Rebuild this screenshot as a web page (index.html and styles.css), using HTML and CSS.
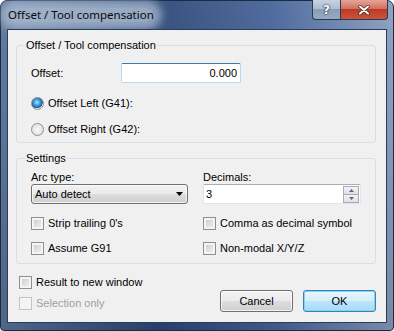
FILE: index.html
```html
<!DOCTYPE html>
<html lang="en">
<head>
    <meta charset="UTF-8">
    <title>Offset / Tool compensation</title>
    <link rel="stylesheet" href="styles.css">
</head>
<body>
    <div class="window">
        <div class="titlebar">
            <span class="title"><span class="title-text">Offset / Tool compensation</span></span>
            <div class="caption">
                <span class="cap-btn help">?</span>
                <span class="cap-btn close">
                    <svg width="12" height="10" viewBox="0 0 12 10">
                        <path d="M2 1.5 L10 8.5 M10 1.5 L2 8.5" stroke="#3a2620" stroke-width="3.4" stroke-linecap="round"/>
                        <path d="M2 1.5 L10 8.5 M10 1.5 L2 8.5" stroke="#fff" stroke-width="2" stroke-linecap="round"/>
                    </svg>
                </span>
            </div>
        </div>

        <div class="client">
            <fieldset class="group group-offset">
                <legend>Offset / Tool compensation</legend>
                <div class="group-body">
                    <div class="offset-row">
                        <label class="offset-label" for="offset">Offset:</label>
                        <input id="offset" class="textbox focused align-right" type="text" value="0.000">
                    </div>
                    <label class="option first"><span class="radio checked"></span>Offset Left (G41):</label>
                    <label class="option second"><span class="radio"></span>Offset Right (G42):</label>
                </div>
            </fieldset>

            <fieldset class="group group-settings">
                <legend>Settings</legend>
                <div class="group-body settings-grid">
                    <div class="col">
                        <div class="field-label">Arc type:</div>
                        <div class="combo">
                            <span>Auto detect</span>
                            <svg width="7" height="4" viewBox="0 0 7 4"><path d="M0 0 H7 L3.5 4 Z" fill="#000"/></svg>
                        </div>
                        <label class="option first"><span class="check"></span>Strip trailing 0's</label>
                        <label class="option second"><span class="check"></span>Assume G91</label>
                    </div>
                    <div class="col">
                        <div class="field-label">Decimals:</div>
                        <div class="spin">
                            <input class="spin-input" type="text" value="3">
                            <div class="spin-buttons">
                                <span class="spin-btn"><svg width="5" height="3" viewBox="0 0 5 3"><path d="M0 3 H5 L2.5 0 Z" fill="#4b6a9c"/></svg></span>
                                <span class="spin-btn"><svg width="5" height="3" viewBox="0 0 5 3"><path d="M0 0 H5 L2.5 3 Z" fill="#4b6a9c"/></svg></span>
                            </div>
                        </div>
                        <label class="option first"><span class="check"></span>Comma as decimal symbol</label>
                        <label class="option second"><span class="check"></span>Non-modal X/Y/Z</label>
                    </div>
                </div>
            </fieldset>

            <div class="footer">
                <div class="footer-checks">
                    <label class="option"><span class="check"></span>Result to new window</label>
                    <label class="option disabled"><span class="check"></span>Selection only</label>
                </div>
                <div class="buttons">
                    <button class="btn">Cancel</button>
                    <button class="btn default">OK</button>
                </div>
            </div>
        </div>
    </div>
</body>
</html>
```

FILE: styles.css
```css
* {
    box-sizing: border-box;
}
body {
    margin: 0;
    background: #fff;
    font-family: "Liberation Sans", Arial, sans-serif;
    font-size: 11px;
    color: #000;
}

/* window frame */
.window {
    width: 394px;
    height: 331px;
    display: flex;
    flex-direction: column;
    padding: 0 6px 7px;
    border: 1px solid #1b2b45;
    border-radius: 7px 7px 4px 4px;
    background:
        linear-gradient(to bottom, rgba(255, 255, 255, 0.06), rgba(0, 0, 0, 0.12)),
        linear-gradient(to right, #5a7498, #2c4876 40%, #47659a 70%, #889ebd 100%);
}
.titlebar {
    height: 28px;
    display: flex;
    justify-content: space-between;
}
.title {
    display: flex;
    align-items: center;
    margin-left: -6px;
    padding-left: 7px;
}
.title-text {
    font-family: "Noto Sans", "Open Sans", sans-serif;
    font-size: 11.5px;
    color: #0a0a0a;
    background: rgba(180, 196, 216, 0.75);
    border-radius: 9px;
    box-shadow: 0 0 9px 8px rgba(180, 196, 216, 0.7);
    line-height: 14px;
}
.caption {
    display: flex;
    align-self: flex-start;
    margin: -1px -1px 0 0;
}
.cap-btn {
    height: 20px;
    display: flex;
    align-items: center;
    justify-content: center;
    border: 1px solid #2a3a56;
    border-top: none;
}
.help {
    width: 28px;
    border-right: none;
    border-radius: 0 0 0 4px;
    background: linear-gradient(#c9d3e0, #aebdd0 45%, #8a9db8 50%, #97aac3);
    color: #fff;
    font-family: "DejaVu Sans", sans-serif;
    font-weight: bold;
    font-size: 12px;
    text-shadow: 0 0 1px #2c3b55, 0 0 1px #2c3b55, 0 0 2px #2c3b55;
}
.close {
    width: 48px;
    border-radius: 0 0 4px 0;
    background: linear-gradient(#e4a498, #d3715f 45%, #bd3b26 50%, #c9533b);
}

/* client area */
.client {
    flex: 1;
    display: flex;
    flex-direction: column;
    background: #f0f0f0;
    border: 1px solid #2a3d5d;
}
.group {
    margin: 9px 10px 0 8px;
    padding: 0;
    min-width: 0;
    border: 1px solid #d5dfe5;
    border-radius: 3px;
}
.group legend {
    margin-left: 8px;
    padding: 0 1px;
    line-height: 13px;
}
.group-offset .group-body {
    padding: 11px 14px 6px;
}
.offset-row {
    display: flex;
    align-items: center;
}
.offset-label {
    width: 90px;
}
.textbox {
    width: 120px;
    height: 20px;
    margin: 0;
    padding: 0 3px;
    font: inherit;
    color: #000;
    background: #fff;
    border: 1px solid #e2e3ea;
    border-top-color: #abadb3;
    border-radius: 2px;
    outline: none;
}
.textbox.focused {
    border-color: #b7d9ed;
    border-top-color: #3d7bad;
}
.align-right {
    text-align: right;
}

.option {
    display: flex;
    align-items: center;
    gap: 4px;
    height: 13px;
    line-height: 13px;
    white-space: nowrap;
}
.group-offset .option.first {
    margin-top: 14px;
}
.group-offset .option.second {
    margin-top: 13px;
}

.radio {
    width: 13px;
    height: 13px;
    border-radius: 50%;
    border: 1px solid #8b8f95;
    background: radial-gradient(circle at 50% 50%, #f8f8f8 0%, #e6e6e6 60%, #d2d4d8 100%);
    flex: none;
}
.radio.checked {
    background:
        radial-gradient(circle at 45% 40%, #b9e4fb 0%, #3b9ddc 35%, #1b5e97 62%, transparent 66%),
        radial-gradient(circle, #f8f8f8 0%, #e6e6e6 70%, #d2d4d8 100%);
}
.check {
    width: 13px;
    height: 13px;
    flex: none;
    border: 1px solid #8e8f8f;
    background: linear-gradient(135deg, #c6cace, #f3f3f3);
    box-shadow: inset 0 0 0 2px #f4f4f4;
}

/* settings */
.settings-grid {
    display: grid;
    grid-template-columns: 157px 158px;
    column-gap: 15px;
    padding: 6px 14px 8px;
}
.field-label {
    line-height: 13px;
}
.combo {
    height: 20px;
    display: flex;
    align-items: center;
    justify-content: space-between;
    padding: 0 4px 0 3px;
    border: 1px solid #707070;
    border-radius: 3px;
    background: linear-gradient(#f2f2f2, #ebebeb 50%, #dddddd 51%, #cfcfcf);
    box-shadow: inset 0 0 0 1px rgba(255, 255, 255, 0.7);
}
.spin {
    height: 20px;
    display: flex;
    align-items: center;
    padding-right: 1px;
    background: #fff;
    border: 1px solid #e2e3ea;
    border-top-color: #abadb3;
    border-radius: 2px;
}
.spin-input {
    flex: 1;
    min-width: 0;
    height: 18px;
    padding: 0 2px;
    border: none;
    outline: none;
    font: inherit;
    color: #000;
    background: transparent;
}
.spin-buttons {
    display: flex;
    flex-direction: column;
    width: 16px;
    height: 17px;
}
.spin-btn {
    flex: 1;
    display: flex;
    align-items: center;
    justify-content: center;
    border: 1px solid #a9acb2;
    background: linear-gradient(#f4f4f4, #e0e0e0);
}
.spin-btn + .spin-btn {
    border-top: none;
}
.settings-grid .option.first {
    margin-top: 13px;
}
.settings-grid .option.second {
    margin-top: 12px;
}

/* footer */
.footer {
    flex: 1;
    display: flex;
    justify-content: space-between;
    align-items: flex-end;
    padding: 12px 10px 10px 11px;
}
.footer-checks {
    align-self: flex-start;
    display: flex;
    flex-direction: column;
    gap: 8px;
}
.option.disabled {
    color: #a0a0a0;
}
.option.disabled .check {
    border-color: #c3c3c3;
    background: #f4f4f4;
    box-shadow: none;
}
.buttons {
    display: flex;
    gap: 10px;
}
.btn {
    width: 73px;
    height: 22px;
    padding: 0;
    font: inherit;
    color: #000;
    border: 1px solid #707070;
    border-radius: 3px;
    background: linear-gradient(#f2f2f2, #ebebeb 50%, #dddddd 51%, #cfcfcf);
    box-shadow: inset 0 0 0 1px rgba(255, 255, 255, 0.75);
}
.btn.default {
    border-color: #3c7fb1;
    background: linear-gradient(#e8f6fd, #d3eefb 50%, #bde5f9 51%, #a8daf4);
    box-shadow: inset 0 0 0 1px #7fd4f8;
}
```
